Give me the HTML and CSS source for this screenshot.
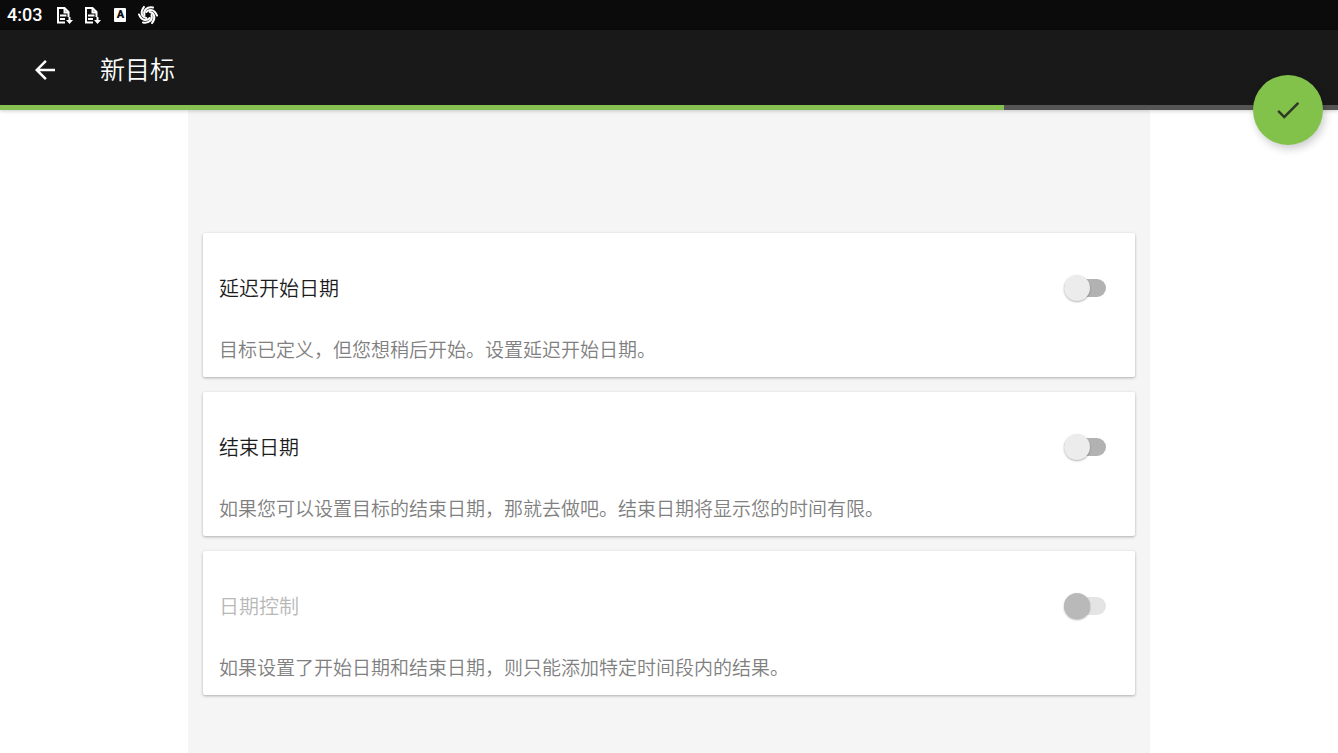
FILE: index.html
```
<!DOCTYPE html>
<html lang="zh-CN">
<head>
  <meta charset="UTF-8">
  <meta name="viewport" content="width=device-width, initial-scale=1.0">
  <title>新目标</title>
  <link rel="stylesheet" href="styles.css">
</head>
<body>
  <!-- Status bar -->
  <div class="status-bar">
    <span class="clock">4:03</span>
    <svg class="status-icon" viewBox="0 0 20 20" fill="none" stroke="#fff" stroke-width="2">
      <path d="M11 17.500H4V3h6.500l4 4v5M10.500 3v4.500h4"/>
      <path d="M6 10.500h6.500M6 14h5"/>
      <path d="M15.500 12v4" stroke-width="2"/>
      <path d="M12 15h7l-3.500 4z" fill="#fff" stroke="none"/>
    </svg>
    <svg class="status-icon" viewBox="0 0 20 20" fill="none" stroke="#fff" stroke-width="2">
      <path d="M11 17.500H4V3h6.500l4 4v5M10.500 3v4.500h4"/>
      <path d="M6 10.500h6.500M6 14h5"/>
      <path d="M15.500 12v4" stroke-width="2"/>
      <path d="M12 15h7l-3.500 4z" fill="#fff" stroke="none"/>
    </svg>
    <span class="letter-icon">A</span>
    <svg class="status-icon" viewBox="0 0 20 20" fill="none" stroke="#fff" stroke-width="2" stroke-linecap="round">
      <g id="blade">
        <path d="M6.500 10C5 5.500 8.500 1.500 15 2.500"/>
      </g>
      <use href="#blade" transform="rotate(60 10 10)"/>
      <use href="#blade" transform="rotate(120 10 10)"/>
      <use href="#blade" transform="rotate(180 10 10)"/>
      <use href="#blade" transform="rotate(240 10 10)"/>
      <use href="#blade" transform="rotate(300 10 10)"/>
    </svg>
  </div>

  <header class="header">
    <div class="toolbar">
      <button class="back" type="button" aria-label="返回">
        <svg width="30" height="30" viewBox="0 0 24 24" fill="#fff"><path d="M20 11H7.83l5.59-5.59L12 4l-8 8 8 8 1.41-1.41L7.83 13H20v-2z"/></svg>
      </button>
      <h1>新目标</h1>
    </div>
    <progress class="progress" value="75" max="100" aria-label="进度"></progress>
    <button class="fab" type="button" aria-label="完成">
      <svg width="30" height="30" viewBox="0 0 24 24" fill="#2f3a26"><path d="M9 16.17L4.83 12l-1.42 1.41L9 19 21 7l-1.41-1.41z"/></svg>
    </button>
  </header>

  <main class="content">
    <section class="card">
      <div class="card-row">
        <label for="delay-start">延迟开始日期</label>
        <input class="switch" type="checkbox" role="switch" id="delay-start">
      </div>
      <p>目标已定义，但您想稍后开始。设置延迟开始日期。</p>
    </section>
    <section class="card">
      <div class="card-row">
        <label for="end-date">结束日期</label>
        <input class="switch" type="checkbox" role="switch" id="end-date">
      </div>
      <p>如果您可以设置目标的结束日期，那就去做吧。结束日期将显示您的时间有限。</p>
    </section>
    <section class="card disabled">
      <div class="card-row">
        <label for="date-control">日期控制</label>
        <input class="switch" type="checkbox" role="switch" id="date-control" disabled>
      </div>
      <p>如果设置了开始日期和结束日期，则只能添加特定时间段内的结果。</p>
    </section>
  </main>
</body>
</html>
```
FILE: styles.css
```
* {
  box-sizing: border-box;
}
body {
  font-family: Roboto, "Noto Sans CJK SC", sans-serif;
  font-weight: 350;
  margin: 0;
  min-height: 100vh;
  display: flex;
  flex-direction: column;
  background-color: #fff;
}
button {
  border: none;
  padding: 0;
  cursor: pointer;
}

/* Status bar */
.status-bar {
  display: flex;
  align-items: center;
  gap: 8px;
  height: 30px;
  padding: 0 7px;
  background-color: #0b0b0b;
  color: #fff;
}
.clock {
  margin-right: 4px;
  font-size: 18px;
  font-weight: 500;
  line-height: 30px;
}
.status-icon {
  width: 20px;
  height: 20px;
}
.letter-icon {
  width: 12px;
  height: 14px;
  margin: 0 4px;
  border-radius: 1px;
  background-color: #fff;
  color: #0b0b0b;
  font-size: 11px;
  font-weight: 900;
  line-height: 13px;
  text-align: center;
}

/* Toolbar with the progress line */
.header {
  position: relative;
  background-color: #191919;
  box-shadow: 0 1px 4px rgba(0, 0, 0, 0.2);
}
.toolbar {
  display: flex;
  align-items: center;
  gap: 40px;
  height: 75px;
  padding: 5px 30px 0;
}
.back {
  display: flex;
  background: none;
}
h1 {
  margin: 0;
  padding-top: 2px;
  color: #fff;
  font-size: 25px;
  font-weight: 350;
  line-height: 36px;
}
.progress {
  display: block;
  width: 100%;
  height: 5px;
  border: none;
  appearance: none;
  background-color: #555;
}
.progress::-webkit-progress-bar {
  background-color: #555;
}
.progress::-webkit-progress-value {
  background-color: #86c050;
}
.fab {
  position: absolute;
  right: 15px;
  bottom: -35px;
  display: flex;
  align-items: center;
  justify-content: center;
  width: 70px;
  height: 70px;
  border-radius: 50%;
  background-color: #82c24b;
  box-shadow: 2px 4px 8px rgba(0, 0, 0, 0.2);
}

/* Cards */
.content {
  flex: 1;
  display: flex;
  flex-direction: column;
  gap: 15px;
  width: 100%;
  max-width: 962px;
  margin: 0 auto;
  padding: 123px 15px 15px;
  background-color: #f5f5f5;
}
.card {
  padding: 39px 16px 11px;
  border-radius: 2px;
  background-color: #fff;
  box-shadow: 0 1px 3px rgba(0, 0, 0, 0.3);
}
.card-row {
  display: flex;
  align-items: center;
  justify-content: space-between;
  padding-right: 13px;
}
.card label {
  padding-top: 2px;
  color: #1c1c1c;
  font-size: 20px;
  line-height: 30px;
}
.card p {
  margin: 32px 0 0;
  color: #808080;
  font-size: 19px;
  line-height: 30px;
}
.card.disabled label {
  color: #b8b8b8;
}

/* Switch */
.switch {
  display: flex;
  align-items: center;
  width: 42px;
  height: 18px;
  margin: 0;
  border-radius: 9px;
  appearance: none;
  background-color: #b2b2b2;
}
.switch::before {
  content: "";
  width: 26px;
  height: 26px;
  flex: none;
  border-radius: 50%;
  background-color: #ececec;
  box-shadow: 0 1px 2px rgba(0, 0, 0, 0.3);
}
.switch:checked {
  justify-content: flex-end;
  background-color: #c5e1a5;
}
.switch:checked::before {
  background-color: #8bc34a;
}
.switch:disabled {
  background-color: #e4e4e4;
}
.switch:disabled::before {
  background-color: #b9b9b9;
}
```
